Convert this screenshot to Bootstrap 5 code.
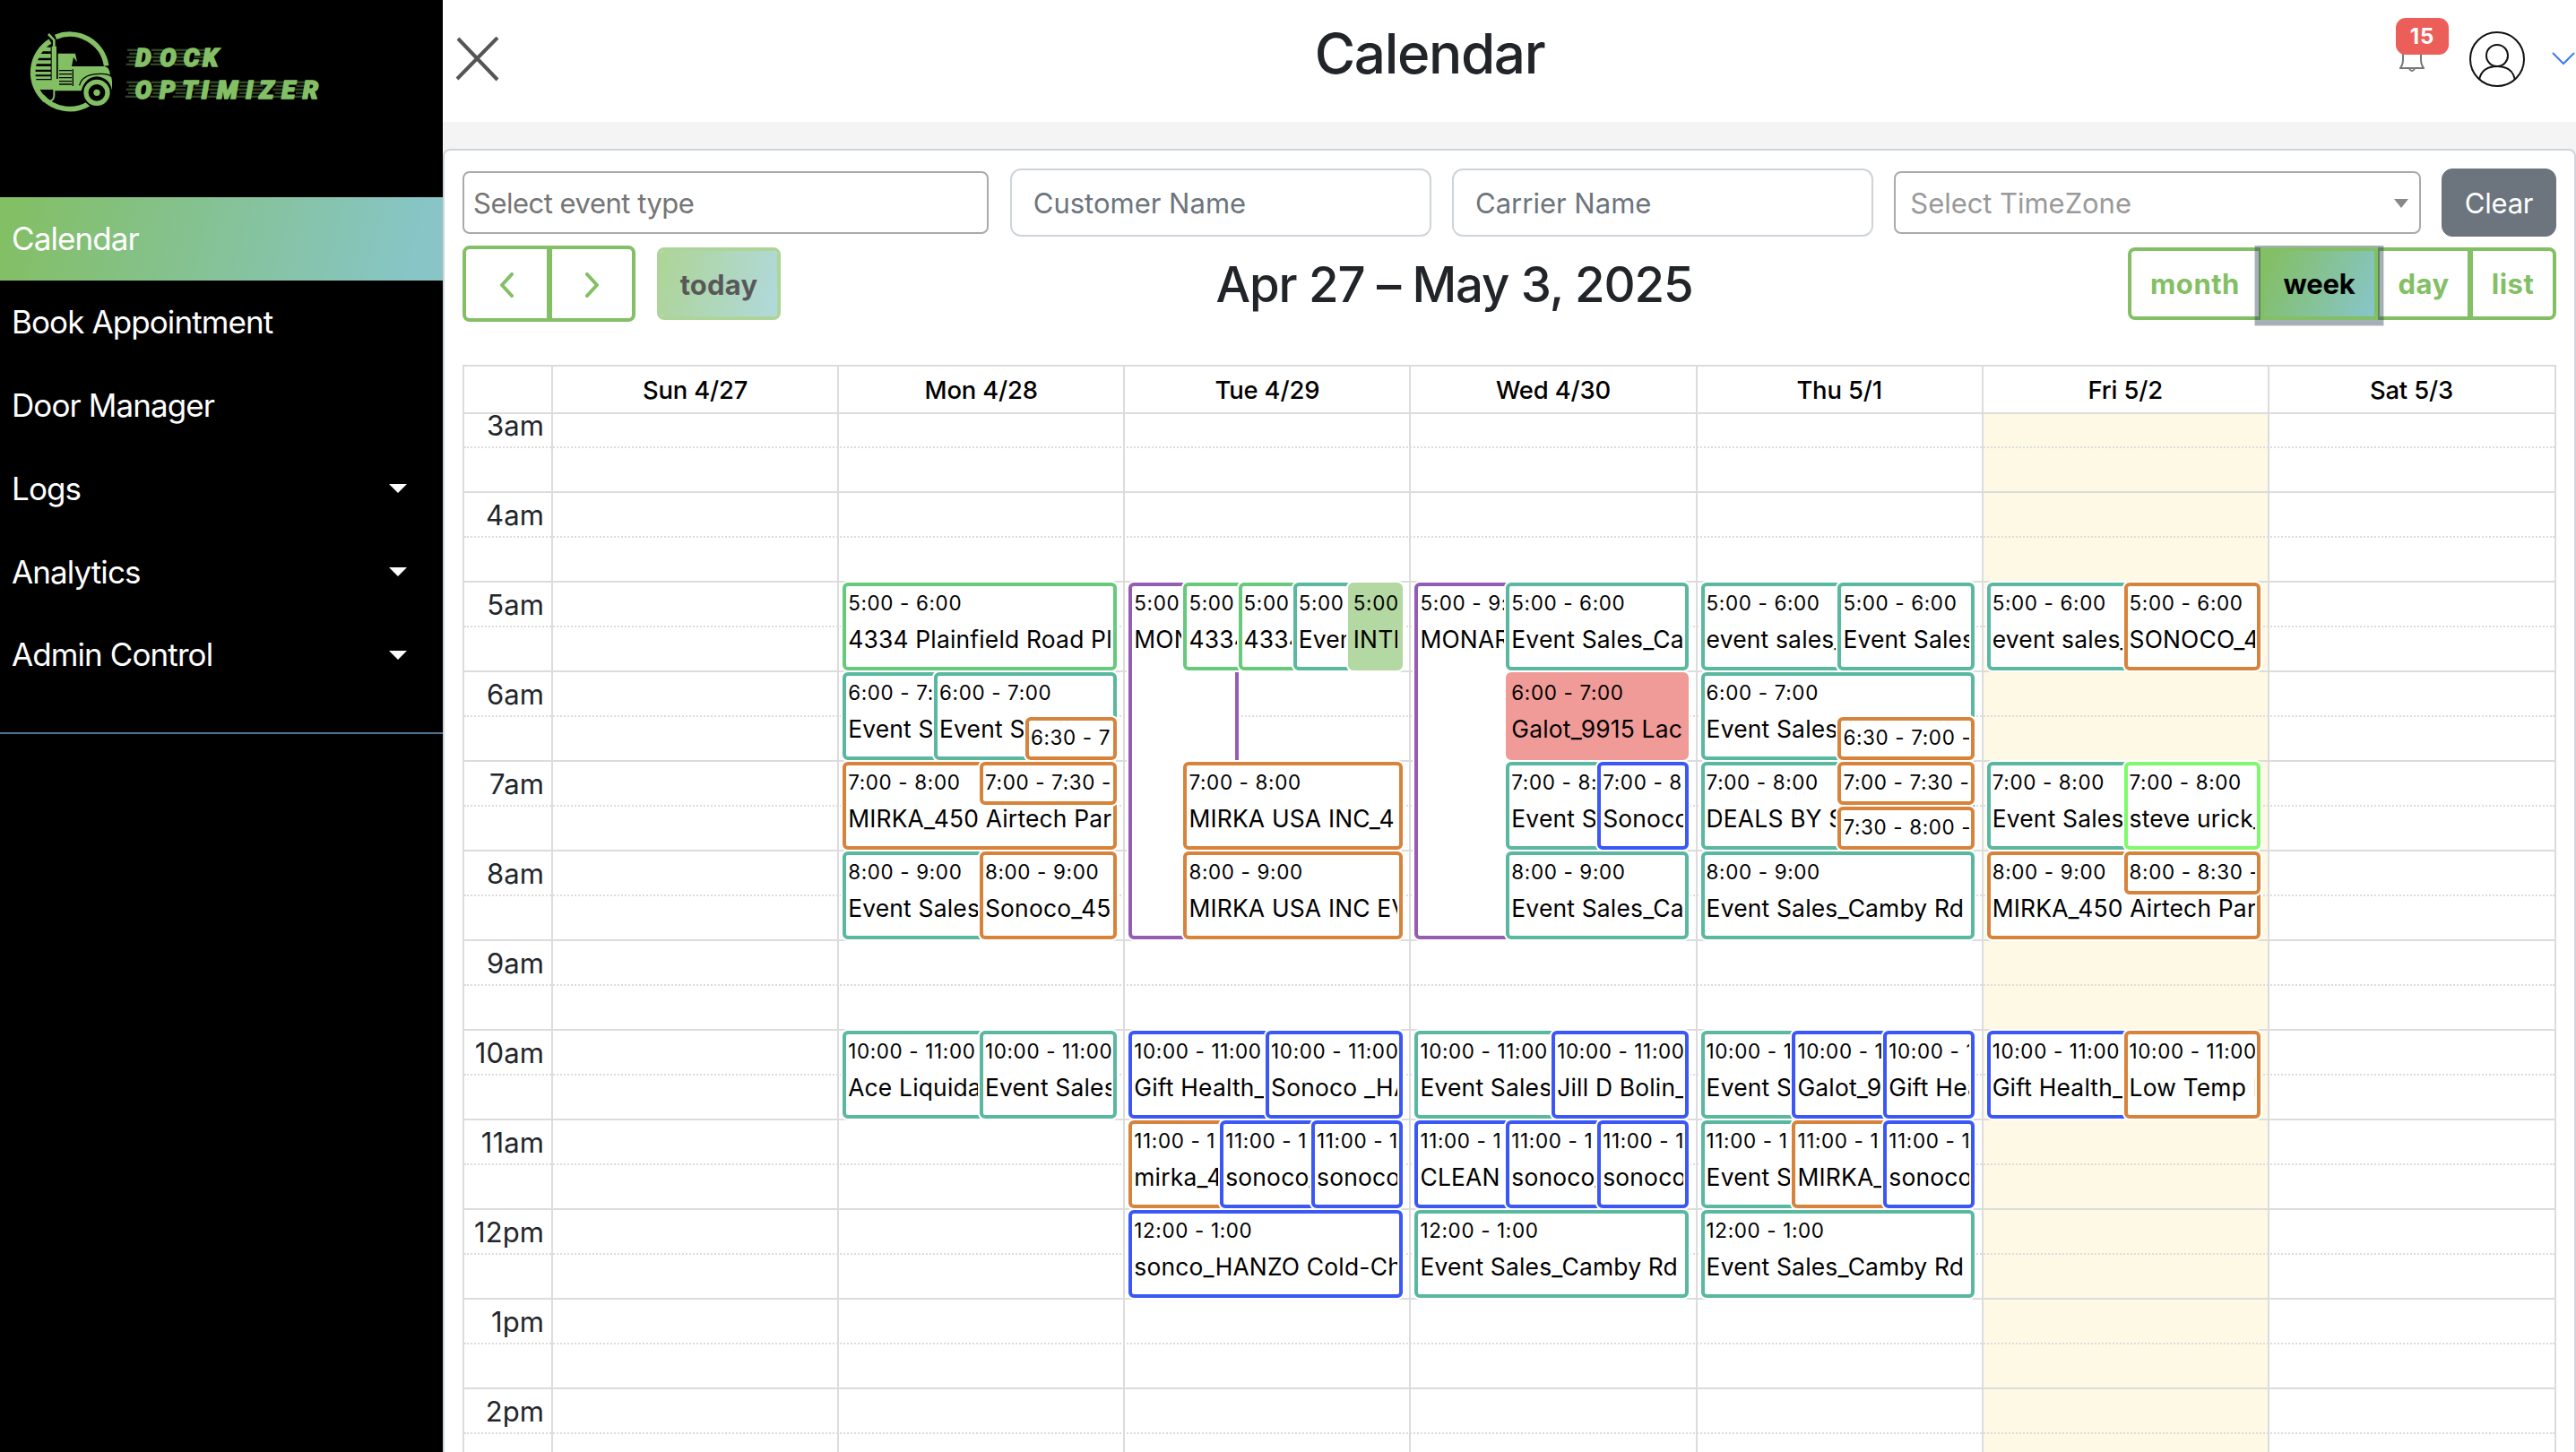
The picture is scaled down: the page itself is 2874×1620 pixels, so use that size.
<!DOCTYPE html>
<html lang="en">
<head>
<meta charset="utf-8">
<title>Calendar - Dock Optimizer</title>
<meta name="viewport" content="width=device-width, initial-scale=1">
<link href="https://cdn.jsdelivr.net/npm/bootstrap@5.3.0/dist/css/bootstrap.min.css" rel="stylesheet">
<style>
:root{--brand:#83bf64;--brand2:#87c5c6;--line:#dcdcdc;--teal:#5ab8a0;--green:#66c97b;--orange:#d8833b;--purple:#955cb4;--blue:#3b57f5;--lime:#7efb6b}
body{font-family:Inter,"Liberation Sans",sans-serif;font-size:31px;line-height:1.5;color:#212529;height:1620px;overflow:hidden;background:#f4f4f4}
.side{width:494px;height:1620px;background:#000}
.brand-logo{width:350px;height:120px;margin:20px 0 80px 20px}
.side-link{height:92.8px;padding:1px 40px 0 13px;color:#fff;font-size:35px;line-height:1;letter-spacing:-.9px}
.side-link.active{background:linear-gradient(105deg,var(--brand) 3%,var(--brand2) 92%)}
.side-rule{height:2px;background:#4f7592;margin-top:40px}
.tri{width:0;height:0;border:10px solid transparent;border-top-color:#fff;border-bottom:0}
.main-area{width:2380px}
.topbar{height:136px;background:#fff;padding:0 0 0 14px}
.topbar h2{font-size:62px;font-weight:500;line-height:1;letter-spacing:-1.36px;margin:0 45px 16px 0}
.user-tools{height:66px}
.bell{margin:23px 50px 0 0}
.chev{margin:23px 0 0 30px}
.panel{margin-top:30px;height:1500px;background:#fff;border:2px solid #ced4da;border-radius:8px;padding:20px 20px 0}
.filters{gap:23.5px}
.field{height:76px;width:470px;font-size:31px;border:2px solid #ced4da;border-radius:12px;padding:2px 24px 0;color:#6c757d;background:#fff}
.field.sel{height:70px;width:587.5px;border-color:#aaa;border-radius:8px;padding:2px 10px 0;color:#757575;letter-spacing:-.5px}
.field.tz{color:#999;padding:2px 12px 0 16px;letter-spacing:-.05px}
.tri.grey{border-width:8px;border-top-width:10px;border-bottom:0;border-top-color:#888}
.btn-clear{width:128px;height:76px;border-radius:12px;font-size:31px;padding:2px 0 0;letter-spacing:-.2px}
.tools{height:85px;margin-top:10px;clip-path:inset(0 0 -12px 0)}
.tools h2{font-size:54.5px;font-weight:500;line-height:1;letter-spacing:-1.1px;padding-top:2px}
.tb{height:81px;border:4px solid var(--brand);background:#fff;color:var(--brand);font-weight:700;font-size:31px;line-height:1;padding:0;border-radius:0;display:flex;align-items:center;justify-content:center;margin-left:-2px;letter-spacing:.5px}
.tb.first{border-radius:8px 0 0 8px;margin-left:0}
.tb.last{border-radius:0 8px 8px 0}
.tb.nav-b{height:85px;padding-top:2px}
.tb.on{background:linear-gradient(115deg,var(--brand) 5%,var(--brand2) 95%);background-clip:padding-box;color:#000;box-shadow:0 0 0 6.4px rgba(44,62,80,.42);position:relative;z-index:1;letter-spacing:-.2px}
.tb.today{margin-left:24px;width:138px;border-radius:8px;opacity:.65;background:linear-gradient(105deg,var(--brand) 5%,var(--brand2) 95%);background-clip:padding-box;color:#000;letter-spacing:.2px;padding-top:1px}
.wk{margin-top:48px;border:2px solid var(--line);border-bottom:0;width:2336px}
.wk-head{height:53px;border-bottom:2px solid var(--line);padding-right:1px}
.axis{width:97px;flex:none}
.wk-head .dh{flex:1 1 0;border-left:2px solid var(--line);color:#000;font-weight:500;font-size:27.4px;line-height:52px;text-align:center;letter-spacing:-.15px}
.wk-body{height:1200px;overflow:hidden;position:relative}
.slots{margin-top:-14px;position:relative}
.slot{height:50px;border-top:2px solid var(--line)}
.slot.half{border-top-style:dotted}
.slot span{display:block;width:89px;padding-top:1px;text-align:right;line-height:48px;font-size:31px;letter-spacing:.1px}
.cols{position:absolute;inset:0;padding-right:1px}
.cols>div:not(.axis){flex:1 1 0;border-left:2px solid var(--line)}
.cols>.now{background:#fdf9e4}
.dayc{position:relative;border-left-color:transparent!important}
.lane{position:absolute;left:4px;right:7.5px;top:0;bottom:0}
.ev{position:absolute;border:4px solid var(--c);border-radius:6px;background:var(--b,#fff);box-shadow:0 0 0 2px #fff;padding:2px 2px 0;color:#000;white-space:nowrap;font-size:26.4px;line-height:40.8px;letter-spacing:.2px;overflow:hidden}
.ev>div{overflow:hidden}
.ev .t{font-size:22.4px;line-height:34.7px;margin-bottom:2px;letter-spacing:.66px}
.badge-n{position:absolute;left:-4px;top:-38px;width:59px;height:41px;border-radius:11px;background:#ec5e59;color:#fff;font-weight:700;font-size:24px;line-height:41px;text-align:center;letter-spacing:.8px}
</style>
</head>
<body>
<div class="d-flex">
  <nav class="side flex-shrink-0">
    <svg class="brand-logo d-block" viewBox="0 0 1050 360" fill="#83bf64">
      <g fill="none" stroke="#83bf64" stroke-width="17">
        <path d="M126 64A124 124 0 0 1 296 160"/>
        <path d="M108 78A124 124 0 0 0 92 276M80 262A124 124 0 0 0 236 288"/>
        <path d="M102 54L121 74V98" stroke-width="8"/>
        <path d="M90 280Q118 282 121 262V236" stroke-width="6"/>
      </g>
      <path d="M113 95H129V240H113Z"/>
      <path d="M134 119H192L198 148L186 132L180 162H290Q308 166 308 190Q314 196 315 214V242Q306 200 264 196Q226 198 212 244H120V204H134Z"/>
      <path d="M76 98H110V112H68ZM62 120H110V134H56ZM54 142H110V154H50ZM50 162H110V173H48ZM48 180H110V190H46ZM48 196H110V204H48ZM48 208H134V240H62Z"/>
      <path d="M138 176H180M138 188H180M138 200H180M138 212H180M138 222H180M184 172V228M206 226Q214 192 262 188Q300 184 312 196" stroke="#000" stroke-width="4" fill="none"/>
      <circle cx="264" cy="250" r="47" stroke="#000" stroke-width="6"/>
      <circle cx="264" cy="250" r="28" fill="#000"/>
      <circle cx="264" cy="250" r="11"/>
      <g id="speed" opacity=".36"></g>
      <g font-family="Roboto,sans-serif" font-weight="900" font-style="italic" font-size="82" stroke="#83bf64" stroke-width="5">
        <text x="394 475 554 619" y="161">DOCK</text>
        <text x="392 474 550 614 666 763 808 883 953" y="269">OPTIMIZER</text>
      </g>
    </svg>
    <a class="side-link active d-flex align-items-center text-decoration-none">Calendar</a>
    <a class="side-link d-flex align-items-center text-decoration-none">Book Appointment</a>
    <a class="side-link d-flex align-items-center text-decoration-none">Door Manager</a>
    <a class="side-link d-flex align-items-center justify-content-between text-decoration-none">Logs<i class="tri"></i></a>
    <a class="side-link d-flex align-items-center justify-content-between text-decoration-none">Analytics<i class="tri"></i></a>
    <a class="side-link d-flex align-items-center justify-content-between text-decoration-none">Admin Control<i class="tri"></i></a>
    <div class="side-rule"></div>
  </nav>
  <main class="main-area">
    <header class="topbar d-flex align-items-center justify-content-between">
      <svg class="mb-1" width="50" height="50" viewBox="0 0 50 50" stroke="#555" stroke-width="4"><path d="M3 2L47 48M47 1L2 47"/></svg>
      <h2>Calendar</h2>
      <div class="user-tools d-flex align-items-start">
        <div class="bell position-relative d-flex">
          <svg width="28" height="22" viewBox="0 0 28 22" fill="none" stroke="#777" stroke-width="2"><path d="M4 0V8Q4 14 1 18H27Q24 14 24 8V0M11 19Q14 23 17 19"/></svg>
          <span class="badge-n">15</span>
        </div>
        <svg width="62" height="62" viewBox="0 0 62 62" fill="none" stroke="#111" stroke-width="2"><circle cx="31" cy="31" r="30"/><circle cx="31" cy="27" r="12"/><path d="M11 54Q14 39 31 39Q48 39 51 54"/></svg>
        <svg class="chev" width="27" height="16" viewBox="0 0 27 16" fill="none" stroke="#3d7bf0" stroke-width="2"><path d="M1 1L13 13L25 1"/></svg>
      </div>
    </header>
    <section class="panel">
      <div class="filters d-flex align-items-center">
        <div class="field sel d-flex align-items-center">Select event type</div>
        <div class="field d-flex align-items-center">Customer Name</div>
        <div class="field d-flex align-items-center">Carrier Name</div>
        <div class="field sel tz d-flex align-items-center justify-content-between">Select TimeZone<i class="tri grey"></i></div>
        <button class="btn btn-secondary btn-clear">Clear</button>
      </div>
      <div class="tools d-flex align-items-center justify-content-between">
        <div class="d-flex align-items-center">
          <button class="tb nav-b first" style="width:98px"><svg width="16" height="28" viewBox="0 0 16 28" fill="none" stroke="currentColor" stroke-width="4" stroke-linecap="round" stroke-linejoin="round"><path d="M14 2L3 14L14 26"/></svg></button>
          <button class="tb nav-b last" style="width:97px"><svg width="16" height="28" viewBox="0 0 16 28" fill="none" stroke="currentColor" stroke-width="4" stroke-linecap="round" stroke-linejoin="round"><path d="M2 2L13 14L2 26"/></svg></button>
          <button class="tb today">today</button>
        </div>
        <h2 class="m-0">Apr 27 – May 3, 2025</h2>
        <div class="d-flex">
          <button class="tb first" style="width:150px">month</button>
          <button class="tb on" style="width:131px">week</button>
          <button class="tb" style="width:106px">day</button>
          <button class="tb last" style="width:97px">list</button>
        </div>
      </div>
      <div class="wk">
        <div class="wk-head d-flex"><div class="axis"></div><div class="dh">Sun 4/27</div><div class="dh">Mon 4/28</div><div class="dh">Tue 4/29</div><div class="dh">Wed 4/30</div><div class="dh">Thu 5/1</div><div class="dh">Fri 5/2</div><div class="dh">Sat 5/3</div></div>
        <div class="wk-body">
          <div class="cols d-flex"><div class="axis"></div><div></div><div></div><div></div><div></div><div></div><div class="now"></div><div></div></div>
          <div class="slots" id="slots"></div>
          <div class="cols d-flex" id="days"><div class="axis"></div></div>
        </div>
      </div>
    </section>
  </main>
</div>
<script>
const HOUR = 100, FIRST = 3, OFFSET = -12;
const slots = document.getElementById('slots');
for (let h = FIRST; h < 15; h++) {
  const label = (h > 12 ? h - 12 : h) + (h < 12 ? 'am' : 'pm');
  slots.insertAdjacentHTML('beforeend', `<div class="slot"><span>${label}</span></div><div class="slot half"></div>`);
}
// Each entry: start, end, lane index, lane count, colour, time text, title
const T = 'teal', G = 'green', O = 'orange', P = 'purple', B = 'blue';
const week = [
  [],
  [[5,6,0,1,G,'5:00 - 6:00','4334 Plainfield Road Pl'],
   [6,7,0,3,T,'6:00 - 7:00','Event Sales'],[6,7,1,3,T,'6:00 - 7:00','Event Sales'],[6.5,7,2,3,O,'6:30 - 7',''],
   [7,8,0,1,O,'7:00 - 8:00','MIRKA_450 Airtech Park'],[7,7.5,1,2,O,'7:00 - 7:30 -',''],
   [8,9,0,2,T,'8:00 - 9:00','Event Sales'],[8,9,1,2,O,'8:00 - 9:00','Sonoco_45'],
   [10,11,0,2,T,'10:00 - 11:00','Ace Liquida'],[10,11,1,2,T,'10:00 - 11:00','Event Sales']],
  [[5,9,0,5,P,'5:00','MONA'],[5,6,1,5,G,'5:00','4334'],[5,6,2,5,G,'5:00','4334'],[5,6,3,5,T,'5:00','Event'],[5,6,4,5,'intl','5:00','INTE'],
   [7,8,1,5,O,'7:00 - 8:00','MIRKA USA INC_4'],[8,9,1,5,O,'8:00 - 9:00','MIRKA USA INC EVE'],
   [10,11,0,2,B,'10:00 - 11:00','Gift Health_'],[10,11,1,2,B,'10:00 - 11:00','Sonoco _HA'],
   [11,12,0,3,O,'11:00 - 1','mirka_4'],[11,12,1,3,B,'11:00 - 1','sonoco_'],[11,12,2,3,B,'11:00 - 1','sonoco'],
   [12,13,0,1,B,'12:00 - 1:00','sonco_HANZO Cold-Cha']],
  [[5,9,0,3,P,'5:00 - 9:00','MONAR'],[5,6,1,3,T,'5:00 - 6:00','Event Sales_Ca'],[6,7,1,3,'red','6:00 - 7:00','Galot_9915 Lac'],
   [7,8,1,3,T,'7:00 - 8:00','Event Sales'],[7,8,2,3,B,'7:00 - 8','Sonoco'],[8,9,1,3,T,'8:00 - 9:00','Event Sales_Ca'],
   [10,11,0,2,T,'10:00 - 11:00','Event Sales'],[10,11,1,2,B,'10:00 - 11:00','Jill D Bolin_'],
   [11,12,0,3,B,'11:00 - 1','CLEAN'],[11,12,1,3,B,'11:00 - 1','sonoco_'],[11,12,2,3,B,'11:00 - 1','sonoco'],
   [12,13,0,1,T,'12:00 - 1:00','Event Sales_Camby Rd']],
  [[5,6,0,2,T,'5:00 - 6:00','event sales_'],[5,6,1,2,T,'5:00 - 6:00','Event Sales'],
   [6,7,0,1,T,'6:00 - 7:00','Event Sales'],[6.5,7,1,2,O,'6:30 - 7:00 -',''],
   [7,8,0,1,T,'7:00 - 8:00','DEALS BY S'],[7,7.5,1,2,O,'7:00 - 7:30 -',''],[7.5,8,1,2,O,'7:30 - 8:00 -',''],
   [8,9,0,1,T,'8:00 - 9:00','Event Sales_Camby Rd'],
   [10,11,0,3,T,'10:00 - 1','Event S'],[10,11,1,3,B,'10:00 - 1','Galot_9'],[10,11,2,3,B,'10:00 - 1','Gift Hea'],
   [11,12,0,3,T,'11:00 - 1','Event S'],[11,12,1,3,O,'11:00 - 1','MIRKA_'],[11,12,2,3,B,'11:00 - 1','sonoco'],
   [12,13,0,1,T,'12:00 - 1:00','Event Sales_Camby Rd']],
  [[5,6,0,2,T,'5:00 - 6:00','event sales_'],[5,6,1,2,O,'5:00 - 6:00','SONOCO_4'],
   [7,8,0,2,T,'7:00 - 8:00','Event Sales'],[7,8,1,2,'lime','7:00 - 8:00','steve urick_'],
   [8,9,0,1,O,'8:00 - 9:00','MIRKA_450 Airtech Park'],[8,8.5,1,2,O,'8:00 - 8:30 -',''],
   [10,11,0,2,B,'10:00 - 11:00','Gift Health_'],[10,11,1,2,O,'10:00 - 11:00','Low Temp I']],
  []
];
const solid = {intl: '#b4d8a1', red: '#f19b98'};
const days = document.getElementById('days');
week.forEach(list => {
  days.insertAdjacentHTML('beforeend', '<div class="dayc"><div class="lane">' + list.map(([s, e, i, n, c, t, title]) => {
    const left = i / n * 100, w = Math.min(100 - left, n === 1 ? 100 : 200 / n);
    const width = (n === 5 && s >= 7) ? 80 : w;
    const col = solid[c] ? `--c:${solid[c]};--b:${solid[c]}` : `--c:var(--${c})`;
    return `<div class="ev" style="top:${(s - FIRST) * HOUR + OFFSET}px;height:${(e - s) * HOUR - 2}px;left:${left}%;width:${width}%;${col}"><div class="t">${t}</div><div>${title}</div></div>`;
  }).join('') + '</div></div>');
});
// Speed streaks trailing each logo letter
const speed = document.getElementById('speed');
[[100, [394, 475, 554, 619]], [208, [392, 474, 550, 614, 666, 763, 808, 883, 953]]].forEach(([y, xs]) => xs.forEach(x => {
  for (let k = 0; k < 5; k++) speed.insertAdjacentHTML('beforeend', `<rect x="${x - 28 + (k % 2) * 8 - k}" y="${y + 4 + k * 12}" width="${42 - (k % 2) * 8}" height="7"/>`);
}));
</script>
<script src="https://cdn.jsdelivr.net/npm/bootstrap@5.3.0/dist/js/bootstrap.bundle.min.js"></script>
</body>
</html>
